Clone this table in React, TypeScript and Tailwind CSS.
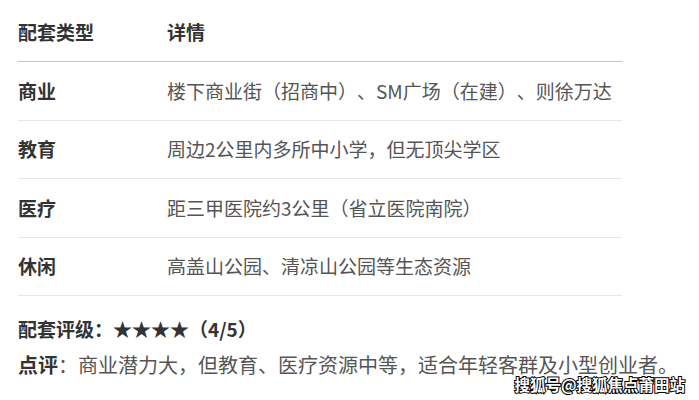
import React from 'react';

const rows = [
  { type: '商业', detail: '楼下商业街（招商中）、SM广场（在建）、则徐万达' },
  { type: '教育', detail: '周边2公里内多所中小学，但无顶尖学区' },
  { type: '医疗', detail: '距三甲医院约3公里（省立医院南院）' },
  { type: '休闲', detail: '高盖山公园、清凉山公园等生态资源' },
];

const font = { fontFamily: '"Microsoft YaHei", "Noto Sans CJK SC", sans-serif' };

export default function App() {
  return (
    <div
      className="relative w-[699px] h-[400px] bg-white overflow-hidden [text-spacing-trim:space-all]"
      style={font}
    >
      <div className="pt-[4px] pl-[18px]">
        <div className="w-[604px]">
          <div className="flex items-center h-[58px] border-b border-[#c4c4c4] text-[19px] font-bold text-[#333]">
            <div className="w-[149px]">配套类型</div>
            <div>详情</div>
          </div>
          {rows.map((row) => (
            <div
              key={row.type}
              className="flex items-center h-[58.5px] border-b border-[#e6e6e6] text-[19px]"
            >
              <div className="w-[149px] font-bold text-[#333]">{row.type}</div>
              <div className="text-[#555] whitespace-nowrap">{row.detail}</div>
            </div>
          ))}
        </div>

        <div className="mt-[20px] text-[19px] font-bold text-[#333] leading-[26px]">
          配套评级：★★★★（4/5）
        </div>
        <div className="mt-[10px] text-[20px] text-[#555] leading-[26px] whitespace-nowrap">
          <span className="font-bold text-[#333]">点评</span>：商业潜力大，但教育、医疗资源中等，适合年轻客群及小型创业者。
        </div>
      </div>

      {/* watermark */}
      <div
        className="absolute right-[14px] bottom-[8px] text-[15.5px] font-bold text-white leading-none"
        style={{ WebkitTextStroke: '2px #000', paintOrder: 'stroke fill' }}
      >
        搜狐号@搜狐焦点莆田站
      </div>
    </div>
  );
}
